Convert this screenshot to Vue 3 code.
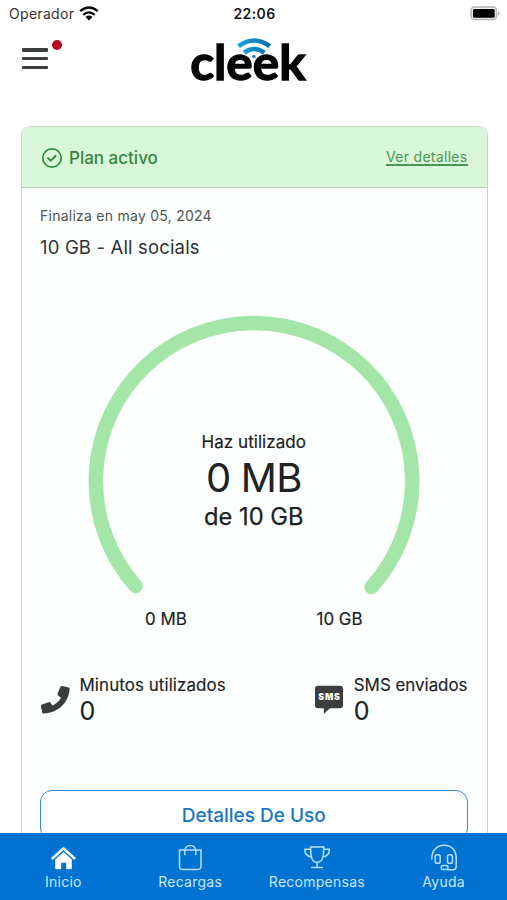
<script setup>
const tabs = [
  { id: 'home', label: 'Inicio' },
  { id: 'bag', label: 'Recargas' },
  { id: 'cup', label: 'Recompensas' },
  { id: 'help', label: 'Ayuda' }
]
</script>

<template>
  <div class="screen">
    <div class="status">
      <div class="carrier">
        <span>Operador</span>
        <svg class="wifi" width="20" height="15" viewBox="0 0 20 15" fill="none" stroke="#050505" stroke-width="2.3">
          <path d="M1.2 5.2Q10-2.2 18.8 5.2M4.3 8.8Q10 4 15.7 8.8" />
          <path d="M6.5 11Q10 8.2 13.5 11L10 14.5Z" fill="#050505" stroke="none" />
        </svg>
      </div>
      <span class="clock">22:06</span>
      <svg class="battery" width="31" height="15" viewBox="0 0 31 15">
        <rect x="1" y="1" width="25.5" height="12.6" rx="3.6" fill="#eee" stroke="#b4b4b4" stroke-width="1.5" />
        <rect x="3" y="3" width="21.7" height="8.8" rx="1.2" fill="#000" />
        <path d="M28 5Q31 7.3 28 9.6Z" fill="#aaa" />
      </svg>
    </div>

    <header class="header">
      <div class="menu">
        <i /><i /><i />
        <b class="dot" />
      </div>
      <svg class="logo" width="124" height="64" viewBox="188 30 124 64">
        <defs>
          <linearGradient id="wave" x1="237" x2="271" y1="0" y2="0" gradientUnits="userSpaceOnUse">
            <stop offset="0" stop-color="#16a4df" />
            <stop offset=".5" stop-color="#1189c5" />
            <stop offset="1" stop-color="#0868a1" />
          </linearGradient>
        </defs>
        <text x="190.2" y="80.2" textLength="115.5" lengthAdjust="spacingAndGlyphs">cleek</text>
        <g fill="none" stroke="url(#wave)" stroke-width="4.6">
          <path d="M238.5 46.2Q254 34.8 269.8 46.2" />
          <path d="M244.3 52.6Q254 45.4 264.3 52.6" />
          <circle cx="254" cy="56.5" r="1.7" fill="#1189c5" stroke="none" />
        </g>
      </svg>
    </header>

    <main class="card">
      <div class="plan">
        <svg width="22" height="22" viewBox="0 0 22 22" fill="none" stroke="#2f8c3c" stroke-width="1.7">
          <circle cx="11" cy="11" r="9.2" />
          <path d="M6.5 10.8L9.8 13.6L15.2 8.2" stroke-width="2" />
        </svg>
        <span class="active">Plan activo</span>
        <span class="link">Ver detalles</span>
      </div>
      <div class="body">
        <p class="ends">Finaliza en may 05, 2024</p>
        <p class="name">10 GB - All socials</p>
        <div class="gauge">
          <svg class="arc" width="340" height="290" viewBox="84 310 340 290">
            <path d="M135.6 586A158.2 158.2 0 1 1 371.6 587" fill="none" stroke="#a3e6a7" stroke-width="14.5" stroke-linecap="round" />
          </svg>
          <div class="reading">
            <span class="used">Haz utilizado</span>
            <span class="amount">0 MB</span>
            <span class="total">de 10 GB</span>
          </div>
        </div>
        <div class="limits"><span>0 MB</span><span>10 GB</span></div>
        <div class="stats">
          <div class="stat">
            <svg width="30" height="30" viewBox="0 0 30 30">
              <path transform="translate(.6 .9)" d="M21.6 1.2L28 2.5Q29.2 2.8 29 4.1C28.3 17 18.5 27.8 3.3 28.7Q1.9 28.8 1.6 27.5L.4 21.4Q.2 20.2 1.4 19.7L8 17.3Q9 16.9 9.7 17.7L12 20.7Q17.6 18 20.3 12.9L17.4 10.3Q16.6 9.6 17 8.5L19.7 2.1Q20.3.9 21.6 1.2Z" fill="#3b3d3e" />
            </svg>
            <div class="metric"><span class="minutes">Minutos utilizados</span><strong>0</strong></div>
          </div>
          <div class="stat">
            <svg width="30" height="30" viewBox="0 0 30 30">
              <path transform="translate(0 .8)" d="M4 1H26Q29 1 29 4V20.5Q29 23.5 26 23.5H16L9.8 29V23.5H4Q1 23.5 1 20.5V4Q1 1 4 1Z" fill="#3b3d3e" />
              <text class="sms" x="4.3" y="16" textLength="21.5" lengthAdjust="spacing">SMS</text>
            </svg>
            <div class="metric"><span>SMS enviados</span><strong>0</strong></div>
          </div>
        </div>
        <div class="button">Detalles De Uso</div>
      </div>
    </main>

    <nav class="tabs">
      <div v-for="tab in tabs" :key="tab.id" class="tab" :class="{ current: tab.id === 'home' }">
        <svg width="28" height="28" viewBox="0 0 28 28" fill="none" stroke="#b9e0ff" stroke-width="1.5" stroke-linejoin="round" stroke-linecap="round">
          <g v-if="tab.id === 'home'" fill="#fff" stroke="none">
            <path d="M14.5 2.8L27 14L25.4 16L14.5 6.2L3.6 16L2 14Z" />
            <path d="M14.5 8L22.8 15.4V24Q22.8 25.2 21.6 25.2H17.2V18.8H12.2V25.2H7.4Q6.2 25.2 6.2 24V15.4Z" />
          </g>
          <g v-else-if="tab.id === 'bag'">
            <path d="M3.5 6H25V22.2Q25 25.5 21.7 25.5H6.8Q3.5 25.5 3.5 22.2ZM8.8 10.5V7C8.8-.3 19.8-.3 19.8 7V10.5" />
          </g>
          <g v-else-if="tab.id === 'cup'">
            <path d="M7.5 3H20.8L20.4 10.5Q19.6 18.3 14.1 18.3Q8.7 18.3 7.9 10.5ZM7.5 5.3H1.8Q1.7 12.5 8.8 12.9M20.8 5.3H26.4Q26.5 12.5 19.5 12.9M14.1 18.5V23.3M8.8 23.5H19.4" />
          </g>
          <g v-else>
            <path d="M1.8 15C1.6 6.6 6.8 1.3 14.3 1.3S26.2 6.6 26.2 14V22.4Q26.2 25.7 23 25.7H17.7" />
            <rect x="5.2" y="10.8" width="5" height="8.4" rx="1.8" />
            <rect x="17.5" y="10.8" width="5" height="8.4" rx="1.8" />
            <rect x="11.2" y="21.6" width="6.8" height="4" rx="1.6" />
          </g>
        </svg>
        <span>{{ tab.label }}</span>
      </div>
    </nav>
  </div>
</template>

<style>
body { background: #fff; }
</style>

<style scoped>
* { box-sizing: border-box; }
.screen { width: 100%; height: 900px; overflow: hidden; display: flex; flex-direction: column; background: #fff; color: #202223; font-family: Inter, "Liberation Sans", sans-serif; }
.status { height: 28px; flex: none; display: grid; grid-template-columns: 1fr auto 1fr; align-items: center; padding: 0 7px 1px 9px; font-size: 14px; color: #333; }
.carrier { display: flex; align-items: center; gap: 5px; letter-spacing: .3px; }
.wifi { margin-top: -1px; }
.clock { font-weight: 600; color: #171717; letter-spacing: .4px; }
.battery { justify-self: end; margin: 0 -1px 0 0; }
.header { height: 98px; flex: none; display: flex; align-items: flex-start; padding: 2px 0 0 22px; }
.menu { width: 40px; height: 45px; margin-right: 126px; padding-top: 18px; display: flex; flex-direction: column; gap: 5.2px; position: relative; }
.menu i { width: 26px; height: 3.6px; flex: none; border-radius: 1px; background: #3b3e3f; }
.dot { position: absolute; left: 30px; top: 10px; width: 10px; height: 10px; border-radius: 50%; background: #b70926; }
.logo { flex: none; }
.logo text { font: 700 48px Lato, sans-serif; fill: #050505; stroke: #050505; stroke-width: 1.3px; }
.card { flex: 1; min-height: 0; margin: 0 19px 0 20.5px; display: flex; flex-direction: column; border: 1.5px solid #cfd1d1; border-bottom: 0; border-radius: 9px 9px 0 0; background: #fcfffe; overflow: hidden; }
.plan { height: 61px; flex: none; display: flex; align-items: center; gap: 6px; padding: 1px 19.5px 0 19.5px; background: #d8f8d9; border-bottom: 1px solid #c1ccc1; }
.active { font-size: 17px; font-weight: 500; color: #398443; }
.link { margin: 1px 0 0 auto; font-size: 14px; letter-spacing: .3px; color: #4d9656; border-bottom: 2px solid #4d9656; line-height: 14px; }
.body { flex: 1; display: flex; flex-direction: column; padding: 18px 19.5px 0 18.5px; }
p { margin: 0; }
.ends { font-size: 14px; line-height: 20px; letter-spacing: .25px; color: #505354; }
.name { margin-top: 8.5px; font-size: 18.5px; line-height: 24px; letter-spacing: .16px; color: #303233; }
.gauge { height: 290px; margin-top: 51.5px; flex: none; display: grid; justify-items: center; }
.arc, .reading { grid-area: 1 / 1; }
.reading { display: flex; flex-direction: column; align-items: center; padding-top: 120px; }
.used { font-size: 17px; line-height: 24px; letter-spacing: .05px; -webkit-text-stroke: .2px; }
.amount { font-size: 40px; line-height: 47px; letter-spacing: -.8px; }
.total { font-size: 23.7px; line-height: 32px; -webkit-text-stroke: .25px; }
.limits { display: flex; justify-content: space-between; margin: 7px 105px 0; font-size: 16.9px; line-height: 24px; -webkit-text-stroke: .2px; }
.stats { display: flex; justify-content: space-between; margin-top: 40px; height: 55px; }
.stat { display: flex; align-items: center; gap: 9.5px; }
.metric { display: flex; flex-direction: column; font-size: 16.9px; line-height: 25px; -webkit-text-stroke: .15px; }
.minutes { letter-spacing: .1px; }
.metric strong { font-size: 25px; font-weight: 400; line-height: 26px; }
.sms { font: 900 8.7px Inter, sans-serif; fill: #fff; }
.button { margin-top: 64px; height: 50px; flex: none; display: grid; place-items: center; border: 1.5px solid #358bd4; border-radius: 12px; background: #fff; color: #1976c8; font-size: 19px; font-weight: 500; }
.tabs { height: 67px; flex: none; display: grid; grid-template-columns: repeat(4, 1fr); background: #0072d2; color: #c7e7ff; position: relative; }
.tab { display: flex; flex-direction: column; align-items: center; padding-top: 11px; font-size: 14px; line-height: 19px; letter-spacing: .25px; }
</style>
